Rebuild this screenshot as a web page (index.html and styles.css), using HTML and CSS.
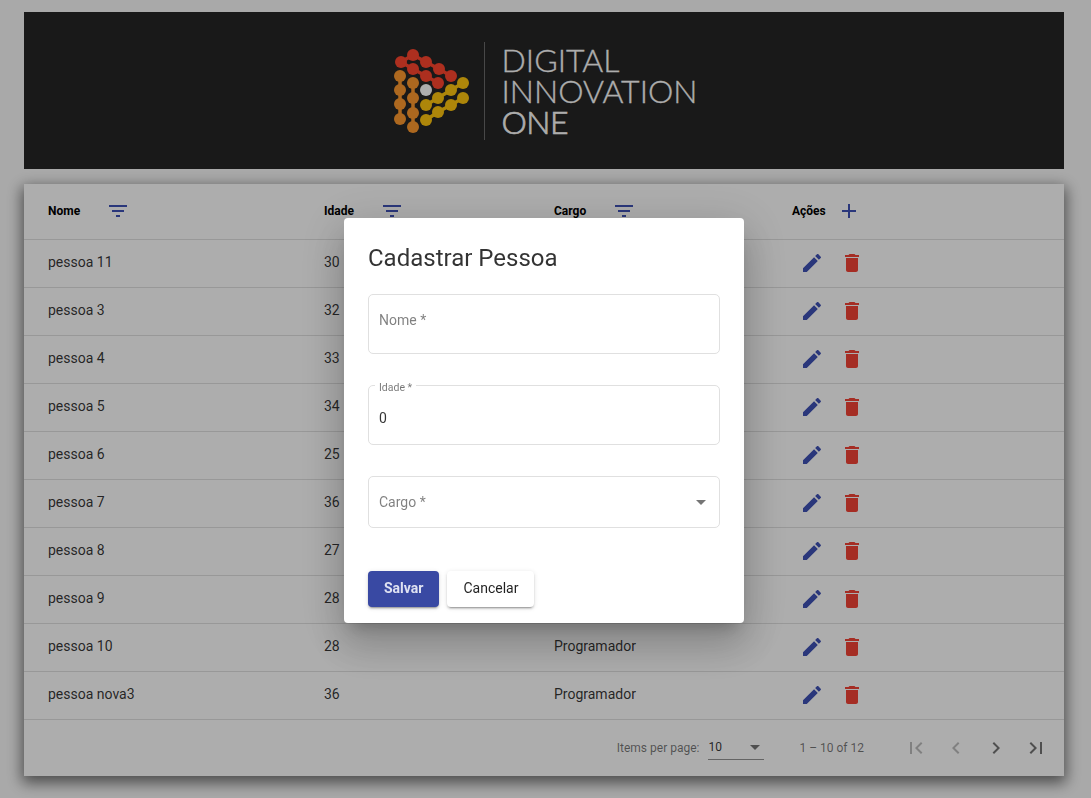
FILE: index.html
```html
<!DOCTYPE html>
<html lang="en">
<head>
  <meta charset="UTF-8" />
  <meta name="viewport" content="width=device-width, initial-scale=1.0"/>
  <title>Digital Innovation One</title>
  <link rel="stylesheet" href="styles.css">
</head>
<body>

<div class="page">
  <header class="banner">
    <svg class="logo-mark" viewBox="0 0 80 100" width="80" height="100">
      <g class="links-red">
        <polyline points="9,21 21,14 34,21 47,28 59,35" />
        <polyline points="9,21 21,28 34,35 46,42" />
      </g>
      <g class="links-orange">
        <polyline points="8,35 8,78" />
        <polyline points="21,42 21,86" />
      </g>
      <g class="links-yellow">
        <polyline points="34,64 46,57 59,49 71,42" />
        <polyline points="34,79 46,71 59,64 71,57" />
      </g>
      <g class="dots-red">
        <circle cx="9" cy="21" r="6"/><circle cx="21" cy="14" r="6"/><circle cx="34" cy="21" r="6"/>
        <circle cx="47" cy="28" r="6"/><circle cx="59" cy="35" r="6"/><circle cx="21" cy="28" r="6"/>
        <circle cx="34" cy="35" r="6"/><circle cx="46" cy="42" r="6"/>
      </g>
      <g class="dots-orange">
        <circle cx="8" cy="35" r="6"/><circle cx="8" cy="49" r="6"/><circle cx="8" cy="63" r="6"/>
        <circle cx="8" cy="78" r="6"/><circle cx="21" cy="42" r="6"/><circle cx="21" cy="57" r="6"/>
        <circle cx="21" cy="72" r="6"/><circle cx="21" cy="86" r="6"/>
      </g>
      <circle class="dot-white" cx="34" cy="49" r="6"/>
      <g class="dots-yellow">
        <circle cx="34" cy="64" r="6"/><circle cx="46" cy="57" r="6"/><circle cx="59" cy="49" r="6"/>
        <circle cx="71" cy="42" r="6"/><circle cx="34" cy="79" r="6"/><circle cx="46" cy="71" r="6"/>
        <circle cx="59" cy="64" r="6"/><circle cx="71" cy="57" r="6"/>
      </g>
    </svg>
    <div class="logo-divider"></div>
    <div class="logo-text">
      <span>DIGITAL</span>
      <span>INNOVATION</span>
      <span class="strong">ONE</span>
    </div>
  </header>

  <main class="card">
    <table class="people">
      <thead>
        <tr>
          <th class="col-name"><div class="head-cell">Nome <button class="icon-btn gap"><svg viewBox="0 0 24 24"><path d="M10 18h4v-2h-4v2zM3 6v2h18V6H3zm3 7h12v-2H6v2z"/></svg></button></div></th>
          <th class="col-age"><div class="head-cell">Idade <button class="icon-btn gap"><svg viewBox="0 0 24 24"><path d="M10 18h4v-2h-4v2zM3 6v2h18V6H3zm3 7h12v-2H6v2z"/></svg></button></div></th>
          <th class="col-role"><div class="head-cell">Cargo <button class="icon-btn gap"><svg viewBox="0 0 24 24"><path d="M10 18h4v-2h-4v2zM3 6v2h18V6H3zm3 7h12v-2H6v2z"/></svg></button></div></th>
          <th><div class="head-cell">Ações <button class="icon-btn add"><svg viewBox="0 0 24 24"><path d="M19 13h-6v6h-2v-6H5v-2h6V5h2v6h6v2z"/></svg></button></div></th>
        </tr>
      </thead>
      <tbody id="rows"></tbody>
    </table>

    <footer class="paginator">
      <span class="muted">Items per page:</span>
      <div class="page-size">
        <span>10</span>
        <i class="caret"></i>
      </div>
      <span class="muted range">1 – 10 of 12</span>
      <button class="icon-btn pager off"><svg viewBox="0 0 24 24"><path d="M18.41 16.59L13.82 12l4.59-4.59L17 6l-6 6 6 6zM6 6h2v12H6z"/></svg></button>
      <button class="icon-btn pager off"><svg viewBox="0 0 24 24"><path d="M15.41 7.41L14 6l-6 6 6 6 1.41-1.41L10.83 12z"/></svg></button>
      <button class="icon-btn pager"><svg viewBox="0 0 24 24"><path d="M10 6L8.59 7.41 13.17 12l-4.58 4.59L10 18l6-6z"/></svg></button>
      <button class="icon-btn pager"><svg viewBox="0 0 24 24"><path d="M5.59 7.41L10.18 12l-4.59 4.59L7 18l6-6-6-6zM16 6h2v12h-2z"/></svg></button>
    </footer>
  </main>
</div>

<div class="backdrop"></div>

<section class="dialog">
  <h2>Cadastrar Pessoa</h2>
  <div class="field tall"><span class="placeholder up">Nome *</span></div>
  <div class="field tall">
    <label class="float-label">Idade *</label>
    <span class="value">0</span>
  </div>
  <div class="field select">
    <span class="placeholder">Cargo *</span>
    <i class="caret"></i>
  </div>
  <div class="actions">
    <button class="btn primary">Salvar</button>
    <button class="btn">Cancelar</button>
  </div>
</section>

<script>
  const people = [
    ['pessoa 11', 30], ['pessoa 3', 32], ['pessoa 4', 33], ['pessoa 5', 34], ['pessoa 6', 25],
    ['pessoa 7', 36], ['pessoa 8', 27], ['pessoa 9', 28], ['pessoa 10', 28], ['pessoa nova3', 36]
  ];

  document.getElementById('rows').innerHTML = people.map(p => `
    <tr>
      <td class="first"><span class="cell-text">${p[0]}</span></td>
      <td><span class="cell-text">${p[1]}</span></td>
      <td><span class="cell-text">Programador</span></td>
      <td>
        <div class="row-actions">
          <button class="icon-btn"><svg viewBox="0 0 24 24"><path d="M3 17.25V21h3.75L17.81 9.94l-3.75-3.75L3 17.25zM20.71 7.04c.39-.39.39-1.02 0-1.41l-2.34-2.34c-.39-.39-1.02-.39-1.41 0l-1.83 1.83 3.75 3.75 1.83-1.83z"/></svg></button>
          <button class="icon-btn danger"><svg viewBox="0 0 24 24"><path d="M6 19c0 1.1.9 2 2 2h8c1.1 0 2-.9 2-2V7H6v12zM19 4h-3.5l-1-1h-5l-1 1H5v2h14V4z"/></svg></button>
        </div>
      </td>
    </tr>`).join('');
</script>

</body>
</html>
```

FILE: styles.css
```css
* {
  box-sizing: border-box;
}

body {
  margin: 0;
  height: 798px;
  overflow: hidden;
  font-family: Roboto, sans-serif;
  background: #fafafa;
  color: rgba(0, 0, 0, 0.8);
}

.page {
  display: flex;
  flex-direction: column;
  gap: 15px;
  padding: 12px 27px 0 24px;
}

.banner {
  height: 157px;
  background: #262626;
  display: flex;
  align-items: center;
  justify-content: center;
  padding-left: 1px;
}

.logo-mark {
  display: block;
}

.logo-mark polyline {
  fill: none;
  stroke-width: 3.5;
}

.links-red { stroke: #ff462e; }
.links-orange { stroke: #ff9a2e; }
.links-yellow { stroke: #ffc60f; }
.dots-red { fill: #ff462e; }
.dots-orange { fill: #ff9a2e; }
.dots-yellow { fill: #ffc60f; }
.dot-white { fill: #fff; }

.logo-divider {
  width: 1px;
  height: 98px;
  background: #6a6a6a;
  margin: 0 17px 0 12px;
}

.logo-text {
  display: flex;
  flex-direction: column;
  font-family: Lato, sans-serif;
  font-weight: 300;
  font-size: 32px;
  line-height: 31px;
  color: #fff;
  -webkit-text-stroke: 0.3px #fff;
}

.logo-text .strong {
  letter-spacing: -0.5px;
  -webkit-text-stroke: 0.7px #fff;
}

.card {
  background: #fff;
  box-shadow: 0 5px 14px 2px rgba(0, 0, 0, 0.55);
}

.people {
  width: 100%;
  border-collapse: collapse;
  table-layout: fixed;
}

.col-name { width: 299px; padding-left: 24px; }
.col-age { width: 230px; }
.col-role { width: 238px; }

.people th {
  height: 55px;
  text-align: left;
  font-size: 12px;
  font-weight: 700;
  color: #000;
  border-bottom: 1px solid rgba(0, 0, 0, 0.12);
}

.head-cell {
  display: flex;
  align-items: center;
}

.people td {
  height: 48px;
  font-size: 14px;
  border-bottom: 1px solid rgba(0, 0, 0, 0.12);
}

.people td.first {
  padding-left: 24px;
}

.cell-text {
  display: block;
  margin-top: -2px;
}

.row-actions {
  display: flex;
}

.icon-btn {
  width: 40px;
  height: 40px;
  padding: 8px;
  border: none;
  background: none;
  fill: #3f51b5;
}

.icon-btn svg {
  display: block;
  width: 24px;
  height: 24px;
}

.icon-btn.gap {
  margin-left: 18px;
}

.icon-btn.add {
  margin-left: 3px;
}

.icon-btn.danger {
  fill: #f44336;
}

.paginator {
  height: 56px;
  display: flex;
  align-items: center;
  justify-content: flex-end;
  padding-right: 8px;
  font-size: 12px;
}

.muted {
  color: rgba(0, 0, 0, 0.54);
}

.page-size {
  width: 56px;
  height: 26px;
  margin: 0 0 2px 9px;
  display: flex;
  align-items: center;
  justify-content: space-between;
  padding: 2px 4px 0 0;
  border-bottom: 1px solid rgba(0, 0, 0, 0.42);
}

.caret {
  width: 0;
  height: 0;
  border-left: 5px solid transparent;
  border-right: 5px solid transparent;
  border-top: 5px solid rgba(0, 0, 0, 0.54);
}

.range {
  margin: 0 32px 0 35px;
}

.pager {
  fill: rgba(0, 0, 0, 0.54);
}

.pager.off {
  fill: rgba(0, 0, 0, 0.26);
}

.backdrop {
  position: fixed;
  inset: 0;
  background: rgba(0, 0, 0, 0.32);
}

.dialog {
  position: fixed;
  left: 344px;
  top: 218px;
  width: 400px;
  height: 405px;
  padding: 24px;
  background: #fff;
  border-radius: 4px;
  box-shadow: 0 11px 15px -7px rgba(0, 0, 0, 0.2), 0 24px 38px 3px rgba(0, 0, 0, 0.14), 0 9px 46px 8px rgba(0, 0, 0, 0.12);
}

.dialog h2 {
  margin: 0 0 20px;
  font-size: 24px;
  line-height: 32px;
  font-weight: 400;
}

.field {
  position: relative;
  display: flex;
  align-items: center;
  justify-content: space-between;
  padding: 0 10px;
  margin-bottom: 31px;
  border: 1px solid #e0e0e0;
  border-radius: 5px;
  font-size: 14px;
}

.field.tall {
  height: 60px;
}

.field.select {
  height: 52px;
  margin-bottom: 43px;
  padding-right: 13px;
}

.placeholder {
  color: rgba(0, 0, 0, 0.5);
}

.placeholder.up {
  margin-top: -9px;
}

.value {
  margin-top: 6px;
}

.float-label {
  position: absolute;
  left: 6px;
  top: -4px;
  padding: 0 4px;
  background: #fff;
  font-size: 10.5px;
  line-height: 12px;
  color: rgba(0, 0, 0, 0.54);
}

.actions {
  display: flex;
  gap: 8px;
}

.btn {
  height: 36px;
  padding: 0 16px 2px;
  border: none;
  border-radius: 4px;
  background: #fff;
  font-family: Roboto, sans-serif;
  font-size: 14px;
  font-weight: 400;
  color: rgba(0, 0, 0, 0.87);
  box-shadow: 0 3px 1px -2px rgba(0, 0, 0, 0.2), 0 2px 2px 0 rgba(0, 0, 0, 0.14), 0 1px 5px 0 rgba(0, 0, 0, 0.12);
}

.btn.primary {
  background: #3949a3;
  color: #dfe2f2;
  font-weight: 700;
}
```
